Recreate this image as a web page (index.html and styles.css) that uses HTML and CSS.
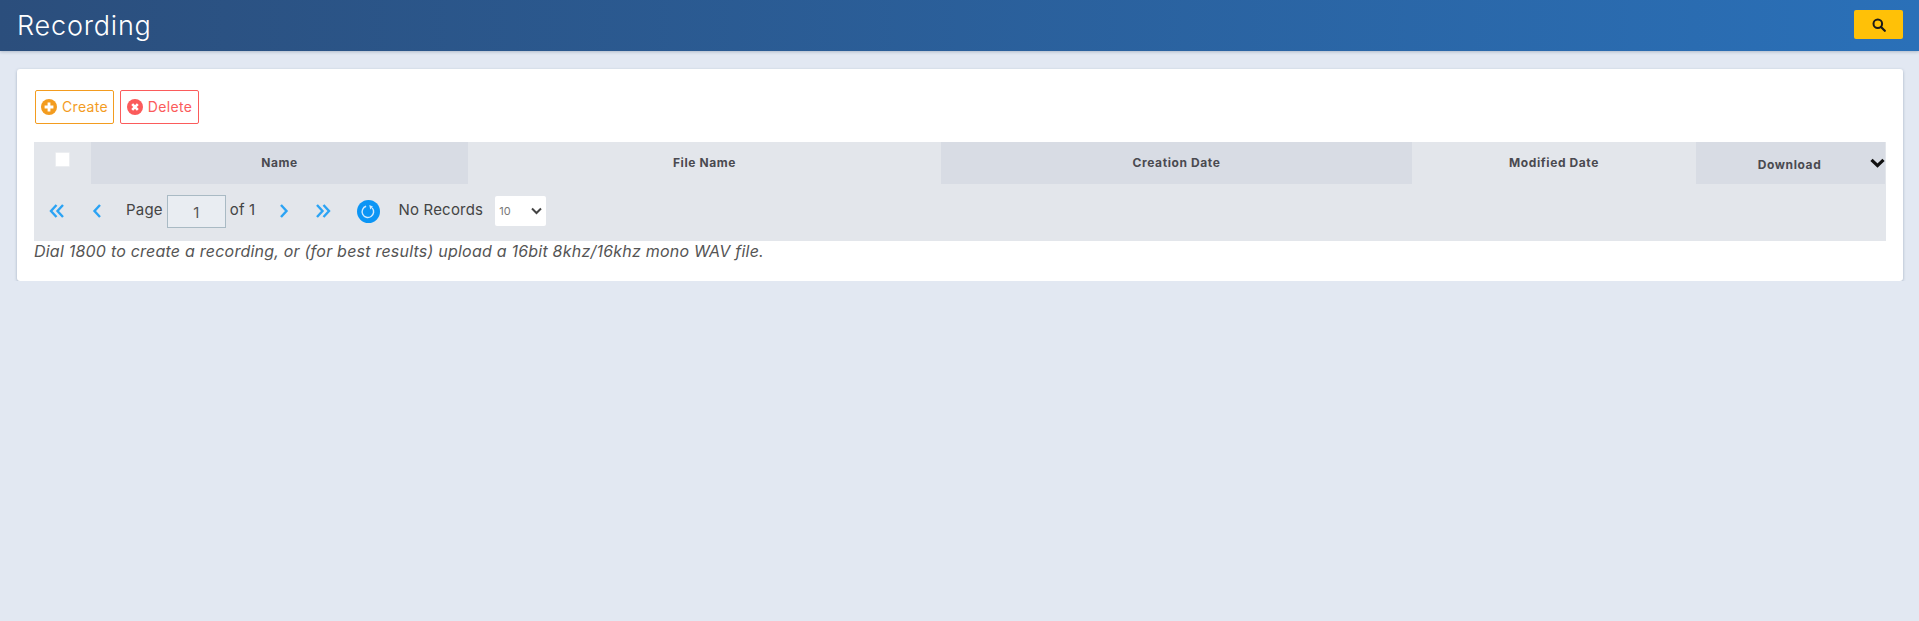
FILE: index.html
```html
<!DOCTYPE html>
<html lang="en">
<head>
<meta charset="utf-8">
<title>Recording</title>
<link rel="stylesheet" href="styles.css">
</head>
<body>
<header class="topbar">
  <h1 class="title">Recording</h1>
  <button class="search-btn" type="button" aria-label="Search">
    <svg width="14" height="14" viewBox="0 0 14 14"><circle cx="5.800" cy="5.800" r="4.300" fill="none" stroke="#1a1a1a" stroke-width="2"/><path d="M9 9l3.800 3.800" stroke="#1a1a1a" stroke-width="2.200" stroke-linecap="round"/></svg>
  </button>
</header>
<main class="card">
  <div class="toolbar">
    <button class="btn btn-create" type="button">
      <svg width="16" height="16" viewBox="0 0 16 16"><circle cx="8" cy="8" r="8" fill="#f39c1f"/><path d="M8 3.600v8.800M3.600 8h8.800" stroke="#fff" stroke-width="2.800"/></svg>
      <span class="btn-label">Create</span>
    </button>
    <button class="btn btn-delete" type="button">
      <svg width="16" height="16" viewBox="0 0 16 16"><circle cx="8" cy="8" r="8" fill="#fb5b5b"/><path d="M5.200 5.200l5.600 5.600M10.800 5.200l-5.600 5.600" stroke="#fff" stroke-width="2.600"/></svg>
      <span class="btn-label">Delete</span>
    </button>
  </div>
  <div class="grid">
    <div class="grid-head">
      <div class="col col-check"><span class="checkbox"></span></div>
      <div class="col col-name shade">Name</div>
      <div class="col col-file">File Name</div>
      <div class="col col-created shade">Creation Date</div>
      <div class="col col-modified">Modified Date</div>
      <div class="col col-download shade">
        <span class="download-label">Download</span>
        <svg class="chevron" width="15" height="10" viewBox="0 0 15 10"><path d="M1.500 1.800L7.500 7.600l6-5.800" fill="none" stroke="#111" stroke-width="3.200"/></svg>
      </div>
    </div>
    <div class="pager">
      <svg class="pg pg-first" width="16" height="16" viewBox="0 0 16 16"><path d="M7.500 2L2 8l5.500 6M14 2L8.500 8l5.500 6" class="pg-line"/></svg>
      <svg class="pg pg-prev" width="10" height="16" viewBox="0 0 10 16"><path d="M8 2L2.500 8 8 14" class="pg-line"/></svg>
      <span class="pg-text pg-page">Page</span>
      <input class="pg-input" type="text" value="1" aria-label="Page">
      <span class="pg-text pg-of">of 1</span>
      <svg class="pg pg-next" width="10" height="16" viewBox="0 0 10 16"><path d="M2 2l5.500 6L2 14" class="pg-line"/></svg>
      <svg class="pg pg-last" width="16" height="16" viewBox="0 0 16 16"><path d="M2 2l5.500 6L2 14M8.500 2L14 8l-5.500 6" class="pg-line"/></svg>
      <svg class="pg-refresh" width="23" height="23" viewBox="0 0 24 24"><circle cx="12" cy="12" r="12" fill="#0b95f5"/><path d="M15.800 8.200A6 6 0 1 1 9.500 6.500" fill="none" stroke="#cfe9fd" stroke-width="1.500"/><path d="M12.800 5.200l3.800 1.600-2.800 3z" fill="#cfe9fd"/></svg>
      <span class="pg-text pg-records">No Records</span>
      <span class="pg-select">
        <select class="pg-size" aria-label="Page size"><option>10</option></select>
        <svg class="pg-caret" width="11" height="8" viewBox="0 0 11 8"><path d="M1 1.500l4.500 4.500L10 1.500" fill="none" stroke="#444" stroke-width="2"/></svg>
      </span>
    </div>
  </div>
  <p class="note">Dial 1800 to create a recording, or (for best results) upload a 16bit 8khz/16khz mono WAV file.</p>
</main>
</body>
</html>
```
FILE: styles.css
```css
* { box-sizing: border-box; }
html, body { margin: 0; }
body {
  background: #e2e8f2;
  font-family: "Inter", "Noto Sans", "Liberation Sans", sans-serif;
  color: #444;
}
.topbar {
  height: 51px;
  display: flex;
  align-items: center;
  justify-content: space-between;
  padding: 0 16px 0 17px;
  background: linear-gradient(90deg, #2b4e7c 0%, #2a70b8 100%);
  box-shadow: 0 1px 3px rgba(60, 80, 110, .3);
}
.title {
  margin: 0;
  font-size: 27px;
  font-weight: 300;
  color: #fff;
  letter-spacing: .8px;
}
.search-btn {
  width: 49px;
  height: 29px;
  border: 0;
  border-radius: 2px;
  background: #ffc107;
  display: flex;
  align-items: center;
  justify-content: center;
  padding: 0;
  margin-top: -2px;
}
.card {
  margin: 18px 16px 0 17px;
  padding: 21px 17px 17px;
  height: 212px;
  background: #fff;
  border-radius: 3px;
  box-shadow: 0 1px 3px rgba(70, 90, 120, .4);
}
.toolbar { display: flex; gap: 6px; height: 34px; margin-left: 1px; }
.btn {
  width: 79px;
  height: 34px;
  display: flex;
  align-items: center;
  justify-content: center;
  gap: 5px;
  padding: 0;
  background: #fff;
  border-radius: 2px;
  font: 400 14px "Inter", "Noto Sans", sans-serif;
  letter-spacing: .35px;
}
.btn-label { margin-top: -1px; }
.btn-create { border: 1px solid #f39c1f; color: #f39c1f; }
.btn-delete { border: 1px solid #fb5b5b; color: #fb5b5b; }
.grid { margin-top: 18px; width: 1852px; background: #e3e6eb; height: 99px; }
.grid-head { display: flex; height: 42px; }
.col {
  display: flex;
  align-items: center;
  justify-content: center;
  font-size: 12px;
  font-weight: 700;
  color: #4a4a50;
  letter-spacing: .6px;
  padding-bottom: 2px;
}
.shade { background: #d8dce4; }
.col-check { width: 57px; align-items: flex-start; padding: 10px 1px 0 0; }
.checkbox { width: 15px; height: 15px; background: #fff; border: 1px solid #eceef1; border-radius: 1px; }
.col-name { width: 377px; }
.col-file { width: 473px; }
.col-created { width: 471px; }
.col-modified { width: 284px; }
.col-download { width: 189px; position: relative; padding: 3px 0 0 0; }
.download-label { margin-right: 2px; }
.chevron { position: absolute; right: 0; top: 16px; }
.pager {
  height: 57px;
  display: flex;
  align-items: center;
  font-size: 15px;
  color: #444;
  padding-bottom: 3px;
}
.pg { flex: none; }
.pg-line { fill: none; stroke: #2ba3f4; stroke-width: 2.400; }
.pg-text { letter-spacing: .2px; margin-top: -3px; }
.pg-first { margin-left: 15px; }
.pg-prev { margin-left: 27px; }
.pg-page { margin-left: 24px; }
.pg-input {
  width: 59px;
  height: 33px;
  margin-left: 4px;
  border: 1px solid #a9bac4;
  background: #e9edf2;
  text-align: center;
  font: 400 15px "Inter", "Noto Sans", sans-serif;
  color: #555;
  padding: 2px 0 0;
}
.pg-of { margin-left: 4px; }
.pg-next { margin-left: 24px; }
.pg-last { margin-left: 26px; }
.pg-refresh { margin-left: 26px; }
.pg-records { margin-left: 18px; }
.pg-select { position: relative; display: block; width: 51px; height: 30px; margin-left: 12px; }
.pg-size {
  appearance: none;
  width: 51px;
  height: 30px;
  border: 0;
  border-radius: 2px;
  background: #fff;
  padding-left: 4px;
  font: 400 11px "Inter", "Noto Sans", sans-serif;
  color: #777;
}
.pg-caret { position: absolute; right: 4px; top: 11px; pointer-events: none; }
.note {
  margin: 0;
  font-size: 16px;
  font-style: italic;
  color: #555;
  line-height: 20px;
  letter-spacing: .22px;
}
```
